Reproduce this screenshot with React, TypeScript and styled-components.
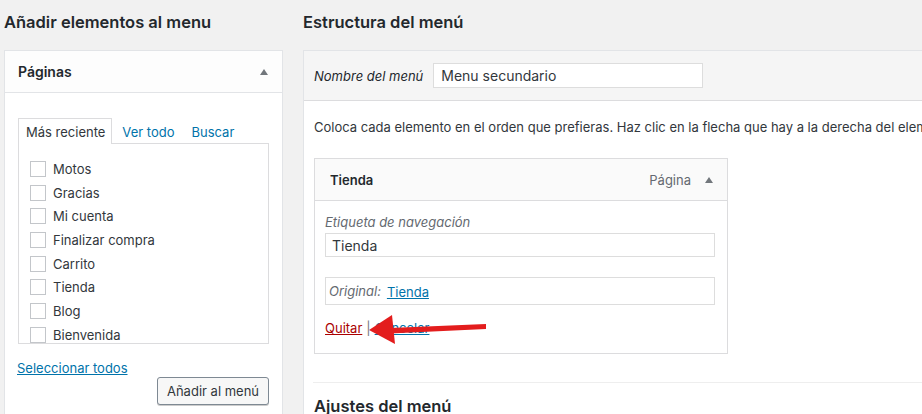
import styled, { createGlobalStyle } from 'styled-components';
import { FC } from 'react';

const pages = [
  'Motos',
  'Gracias',
  'Mi cuenta',
  'Finalizar compra',
  'Carrito',
  'Tienda',
  'Blog',
  'Bienvenida',
];

const App: FC = () => {
  return (
    <>
      <GlobalStyle />
      <Page>
        <LeftColumn>
          <Heading>Añadir elementos al menu</Heading>
          <SidePanel>
            <SideHeader>
              <SideTitle>Páginas</SideTitle>
              <Caret />
            </SideHeader>
            <SideBody>
              <Tabs>
                <Tab active>Más reciente</Tab>
                <Tab>Ver todo</Tab>
                <Tab>Buscar</Tab>
              </Tabs>
              <PageList>
                {pages.map((p) => (
                  <PageRow key={p}>
                    <Checkbox />
                    {p}
                  </PageRow>
                ))}
              </PageList>
              <SelectAll href="#">Seleccionar todos</SelectAll>
              <ButtonRow>
                <Button>Añadir al menú</Button>
              </ButtonRow>
            </SideBody>
          </SidePanel>
        </LeftColumn>

        <RightColumn>
          <Heading>Estructura del menú</Heading>
          <MenuPanel>
            <MenuHeader>
              <FieldLabel>Nombre del menú</FieldLabel>
              <NameInput>Menu secundario</NameInput>
            </MenuHeader>
            <MenuBody>
              <Intro>
                Coloca cada elemento en el orden que prefieras. Haz clic en la flecha que hay a
                la derecha del elemento para mostrar más opciones de configuración.
              </Intro>
              <ItemBox>
                <ItemHeader>
                  <ItemTitle>Tienda</ItemTitle>
                  <ItemType>Página</ItemType>
                  <Caret />
                </ItemHeader>
                <ItemBody>
                  <FieldCaption>Etiqueta de navegación</FieldCaption>
                  <TextInput>Tienda</TextInput>
                  <OriginalBox>
                    <FieldCaption as="span">Original:</FieldCaption>
                    <Link href="#">Tienda</Link>
                  </OriginalBox>
                  <Actions>
                    <RemoveLink href="#">Quitar</RemoveLink>
                    <Sep>|</Sep>
                    <Link href="#">Cancelar</Link>
                  </Actions>
                  {/* red annotation arrow pointing at "Quitar" */}
                  <Arrow viewBox="0 0 125 34">
                    <path d="M121 11 L25 15 L25 20.5 L121 16 Z" fill="#e31d1d" />
                    <path d="M4 17 L27 2 L30 31 Z" fill="#e31d1d" />
                  </Arrow>
                </ItemBody>
              </ItemBox>
              <Divider />
              <SubHeading>Ajustes del menú</SubHeading>
            </MenuBody>
          </MenuPanel>
        </RightColumn>
      </Page>
    </>
  );
};

export default App;

const GlobalStyle = createGlobalStyle`
  html, body {
    margin: 0;
    padding: 0;
    background: #f1f1f1;
    font-family: Inter, "Liberation Sans", Arial, sans-serif;
    font-size: 13px;
    color: #32373c;
  }
  * { box-sizing: border-box; }
`;

const Page = styled.div`
  display: flex;
  gap: 20px;
  padding-left: 4px;
  width: 922px;
  height: 414px;
  overflow: hidden;
`;

const LeftColumn = styled.div`
  width: 279px;
  flex-shrink: 0;
`;

const RightColumn = styled.div`
  width: 700px;
  flex-shrink: 0;
`;

const Heading = styled.h2`
  margin: 0;
  height: 50px;
  padding-top: 12px;
  font-size: 16.5px;
  font-weight: 600;
  color: #23282d;
  line-height: 20px;
`;

const SidePanel = styled.div`
  background: #fff;
  border: 1px solid #e2e4e7;
  height: 400px;
`;

const SideHeader = styled.div`
  display: flex;
  align-items: center;
  justify-content: space-between;
  height: 42px;
  padding: 0 14px 0 13px;
  border-bottom: 1px solid #e2e4e7;
  background: #fdfdfd;
`;

const SideTitle = styled.span`
  font-size: 14px;
  font-weight: 600;
  color: #23282d;
`;

const Caret = styled.span`
  width: 0;
  height: 0;
  border-left: 4px solid transparent;
  border-right: 4px solid transparent;
  border-bottom: 6px solid #72777c;
  margin-left: 14px;
`;

const SideBody = styled.div`
  padding: 25px 13px 0 13px;
`;

const Tabs = styled.div`
  display: flex;
  align-items: flex-end;
  height: 25px;
`;

const Tab = styled.span<{ active?: boolean }>`
  display: flex;
  align-items: center;
  height: 26px;
  padding: 0 6px 0 7px;
  margin-right: 2px;
  color: ${(p) => (p.active ? '#32373c' : '#0073aa')};
  background: ${(p) => (p.active ? '#fff' : 'transparent')};
  border: 1px solid ${(p) => (p.active ? '#dcdcde' : 'transparent')};
  border-bottom: none;
  position: relative;
  z-index: 1;
  margin-bottom: -1px;
`;

const PageList = styled.div`
  border: 1px solid #dcdcde;
  height: 201px;
  overflow: hidden;
  padding: 13px 0 0 11px;
`;

const PageRow = styled.div`
  display: flex;
  align-items: center;
  height: 23.7px;
  font-size: 13px;
  color: #32373c;
`;

const Checkbox = styled.span`
  width: 16px;
  height: 16px;
  border: 1px solid #c3c6ca;
  background: #fff;
  margin-right: 7px;
  flex-shrink: 0;
`;

const Link = styled.a`
  color: #0073aa;
  text-decoration: underline;
`;

const SelectAll = styled(Link)`
  display: block;
  margin: 16px 0 0 -1px;
  line-height: 17px;
`;

const ButtonRow = styled.div`
  display: flex;
  justify-content: flex-end;
`;

const Button = styled.button`
  height: 28px;
  width: 112px;
  padding: 0;
  white-space: nowrap;
  border: 1px solid #7e8993;
  border-radius: 3px;
  background: #f7f7f7;
  color: #32373c;
  font-family: inherit;
  font-size: 13px;
  box-shadow: 0 1px 0 #ccc;
`;

const MenuPanel = styled.div`
  background: #fff;
  border: 1px solid #e2e4e7;
  height: 400px;
`;

const MenuHeader = styled.div`
  display: flex;
  align-items: center;
  height: 50px;
  padding: 0 10px;
  background: #f5f5f5;
  border-bottom: 1px solid #dcdcde;
`;

const FieldLabel = styled.span`
  font-style: italic;
  color: #23282d;
  margin-right: 10px;
`;

const NameInput = styled.div`
  width: 270px;
  height: 25px;
  display: flex;
  align-items: center;
  padding: 0 7px;
  background: #fff;
  border: 1px solid #ddd;
  font-size: 14px;
  color: #32373c;
`;

const MenuBody = styled.div`
  padding: 16px 0 0 10px;
`;

const Intro = styled.p`
  margin: 0 0 21px;
  line-height: 20px;
  white-space: nowrap;
  color: #32373c;
`;

const ItemBox = styled.div`
  width: 414px;
  border: 1px solid #dcdcde;
  background: #fff;
`;

const ItemHeader = styled.div`
  display: flex;
  align-items: center;
  height: 42px;
  padding: 0 14px 0 15px;
  background: #fafafa;
  border-bottom: 1px solid #dcdcde;
`;

const ItemTitle = styled.span`
  flex: 1;
  font-weight: 600;
  color: #23282d;
`;

const ItemType = styled.span`
  color: #646970;
`;

const ItemBody = styled.div`
  position: relative;
  padding: 13px 12px 16px 10px;
`;

const FieldCaption = styled.div`
  font-style: italic;
  color: #646970;
  line-height: 17px;
  margin-bottom: 2px;
`;

const TextInput = styled.div`
  height: 24px;
  display: flex;
  align-items: center;
  padding: 0 6px;
  border: 1px solid #ddd;
  font-size: 14px;
  color: #32373c;
`;

const OriginalBox = styled.div`
  display: flex;
  align-items: center;
  gap: 6px;
  height: 28px;
  margin-top: 20px;
  padding: 1px 3px 0;
  border: 1px solid #ddd;

  ${FieldCaption} {
    margin: 0;
  }
`;

const Actions = styled.div`
  display: flex;
  align-items: center;
  gap: 4px;
  margin-top: 15px;
  line-height: 17px;
`;

const RemoveLink = styled.a`
  color: #a00;
  text-decoration: underline;
`;

const Sep = styled.span`
  color: #72777c;
`;

const Arrow = styled.svg`
  position: absolute;
  left: 50px;
  top: 112px;
  width: 125px;
  height: 34px;
`;

const Divider = styled.div`
  height: 1px;
  background: #eee;
  margin: 28px 0 0 -1px;
`;

const SubHeading = styled.h3`
  margin: 13px 0 0;
  font-size: 16.5px;
  font-weight: 600;
  color: #23282d;
`;
